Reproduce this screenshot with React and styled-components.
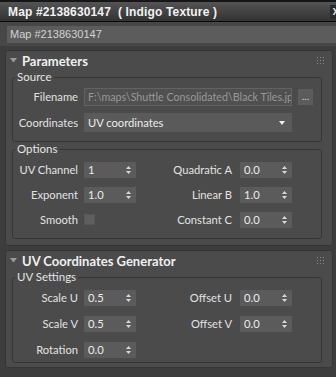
import React from 'react';
import styled, { createGlobalStyle } from 'styled-components';

const Global = createGlobalStyle`
  html, body { margin: 0; padding: 0; background: #444444; overflow: hidden; }
  body { font-family: Lato, "Liberation Sans", sans-serif; }
`;

const Window = styled.div`
  width: 342px;
  height: 377px;
  background: #444444;
  display: flex;
  flex-direction: column;
`;

const TitleBar = styled.div`
  height: 19px;
  border-top: 2px solid #161616;
  border-bottom: 1px solid #0a0a0a;
  background: linear-gradient(#545454, #323232);
  display: flex;
  align-items: center;
  padding-left: 8px;
  font: bold 12px "Liberation Sans", Arial, sans-serif;
  letter-spacing: 0.15px;
  color: #f2f2f2;
  white-space: pre;
`;

const Close = styled.span`
  margin-left: auto;
  width: 12px;
  height: 14px;
  background: #2a2a2a;
  color: #dcdcdc;
  font: bold 12px "Liberation Sans", Arial, sans-serif;
  line-height: 13px;
  text-align: center;
`;

const NameBar = styled.div`
  height: 24px;
  box-sizing: border-box;
  padding: 4px 6px 3px 7px;
  background: #474747;
`;

const NameField = styled.div`
  height: 17px;
  background: #5c5c5c;
  color: #d2d2d2;
  font-family: "Liberation Sans", Arial, sans-serif;
  font-size: 11px;
  line-height: 17px;
  padding-left: 3px;
`;

const Content = styled.div`
  flex: 1;
  background: #3d3d3d;
  padding: 4px 9px 0 5px;
  display: flex;
  flex-direction: column;
  gap: 4px;
`;

const Rollout = styled.div`
  background: #4b4b4b;
  border: 1px solid #363636;
  border-radius: 3px;
  display: flex;
  flex-direction: column;
  padding: 0 10px ${p => p.$pb}px 6px;
`;

const RolloutHeader = styled.div`
  height: 19px;
  display: flex;
  align-items: center;
  margin-left: -2px;
  font-weight: bold;
  font-size: 13px;
  color: #f0f0f0;
  gap: 5px;
`;

const Grip = styled.svg`
  margin-left: auto;
  margin-right: -2px;
`;

const Group = styled.fieldset`
  margin: 0;
  padding: 0;
  min-width: 0;
  border: 1px solid #363636;
  border-radius: 3px;
`;

const Legend = styled.legend`
  margin-left: 2px;
  padding: 0 2px;
  font-size: 11.5px;
  line-height: 14px;
  color: #e4e4e4;
`;

const Rows = styled.div`
  display: flex;
  flex-direction: column;
  gap: ${p => p.$gap}px;
  padding: ${p => p.$pt}px 0 ${p => p.$pb}px;
`;

const SourceRow = styled.div`
  display: grid;
  grid-template-columns: 71px 208px auto;
  align-items: center;
  height: 19px;
`;

const GridRow = styled.div`
  display: grid;
  grid-template-columns: 71px 52px 104px 52px;
  align-items: center;
  height: 19px;
`;

const Label = styled.span`
  text-align: right;
  padding-right: ${p => p.$pr}px;
  font-size: 11.2px;
  color: #e2e2e2;
  white-space: nowrap;
`;

const TextField = styled.div`
  height: 18px;
  box-sizing: border-box;
  border: 1px solid #626262;
  background: #505050;
  color: #989898;
  font-size: 10.7px;
  line-height: 16px;
  padding-left: 3px;
  white-space: nowrap;
  overflow: hidden;
`;

const BrowseButton = styled.div`
  margin-left: 6px;
  width: 15px;
  height: 16px;
  background: #5c5c5c;
  color: #d0d0d0;
  font-size: 10px;
  line-height: 14px;
  text-align: center;
`;

const Dropdown = styled.div`
  height: 19px;
  background: #5a5a5a;
  display: flex;
  align-items: center;
  padding: 0 7px 0 4px;
  color: #ececec;
  font-size: 11.2px;
`;

const SpinnerBox = styled.div`
  height: 16px;
  background: #5b5b5b;
  display: flex;
  align-items: center;
  padding: 0 5px 0 4px;
  color: #ececec;
  font-size: 11.2px;
`;

const Checkbox = styled.div`
  width: 11px;
  height: 11px;
  box-sizing: border-box;
  background: #5e5e5e;
  border: 1px solid #585858;
`;

const Arrow = () => (
  <svg width="7" height="5" viewBox="0 0 7 5">
    <path d="M0 0 H7 L3.5 4.5 Z" fill="#9a9a9a" />
  </svg>
);

const GripIcon = () => (
  <Grip width="7" height="7" viewBox="0 0 7 7">
    {[0, 3, 6].map(y => [0, 3, 6].map(x => (
      <rect key={`${x}-${y}`} x={x} y={y} width="1" height="1" fill="#8a8a8a" />
    )))}
  </Grip>
);

const SpinArrows = () => (
  <svg width="5" height="10" viewBox="0 0 5 10" style={{ marginLeft: 'auto' }}>
    <path d="M0 4 L2.5 1 L5 4 Z" fill="#d8d8d8" />
    <path d="M0 6 L2.5 9 L5 6 Z" fill="#d8d8d8" />
  </svg>
);

const DropArrow = () => (
  <svg width="6" height="4" viewBox="0 0 6 4" style={{ marginLeft: 'auto' }}>
    <path d="M0 0 H6 L3 4 Z" fill="#f0f0f0" />
  </svg>
);

const Spinner = ({ value }) => (
  <SpinnerBox>
    <span>{value}</span>
    <SpinArrows />
  </SpinnerBox>
);

const Pair = ({ l1, v1, l2, v2, check }) => (
  <GridRow>
    <Label $pr={6}>{l1}</Label>
    {check ? <Checkbox /> : <Spinner value={v1} />}
    <Label $pr={8}>{l2}</Label>
    <Spinner value={v2} />
  </GridRow>
);

export default function App() {
  return (
    <>
      <Global />
      <Window>
        <TitleBar>
          Map #2138630147  ( Indigo Texture )
          <Close>x</Close>
        </TitleBar>
        <NameBar>
          <NameField>Map #2138630147</NameField>
        </NameBar>
        <Content>
          <Rollout $pb={6}>
            <RolloutHeader>
              <Arrow />
              Parameters
              <GripIcon />
            </RolloutHeader>
            <Group>
              <Legend>Source</Legend>
              <Rows $gap={7} $pt={3} $pb={9}>
                <SourceRow>
                  <Label $pr={6}>Filename</Label>
                  <TextField>F:\maps\Shuttle Consolidated\Black Tiles.jpg</TextField>
                  <BrowseButton>...</BrowseButton>
                </SourceRow>
                <SourceRow>
                  <Label $pr={6}>Coordinates</Label>
                  <Dropdown>
                    UV coordinates
                    <DropArrow />
                  </Dropdown>
                </SourceRow>
              </Rows>
            </Group>
            <Group>
              <Legend>Options</Legend>
              <Rows $gap={6} $pt={4} $pb={9}>
                <Pair l1="UV Channel" v1="1" l2="Quadratic A" v2="0.0" />
                <Pair l1="Exponent" v1="1.0" l2="Linear B" v2="1.0" />
                <Pair l1="Smooth" check l2="Constant C" v2="0.0" />
              </Rows>
            </Group>
          </Rollout>
          <Rollout $pb={4}>
            <RolloutHeader>
              <Arrow />
              UV Coordinates Generator
              <GripIcon />
            </RolloutHeader>
            <Group>
              <Legend>UV Settings</Legend>
              <Rows $gap={7} $pt={4} $pb={3}>
                <Pair l1="Scale U" v1="0.5" l2="Offset U" v2="0.0" />
                <Pair l1="Scale V" v1="0.5" l2="Offset V" v2="0.0" />
                <GridRow>
                  <Label $pr={6}>Rotation</Label>
                  <Spinner value="0.0" />
                </GridRow>
              </Rows>
            </Group>
          </Rollout>
        </Content>
      </Window>
    </>
  );
}
